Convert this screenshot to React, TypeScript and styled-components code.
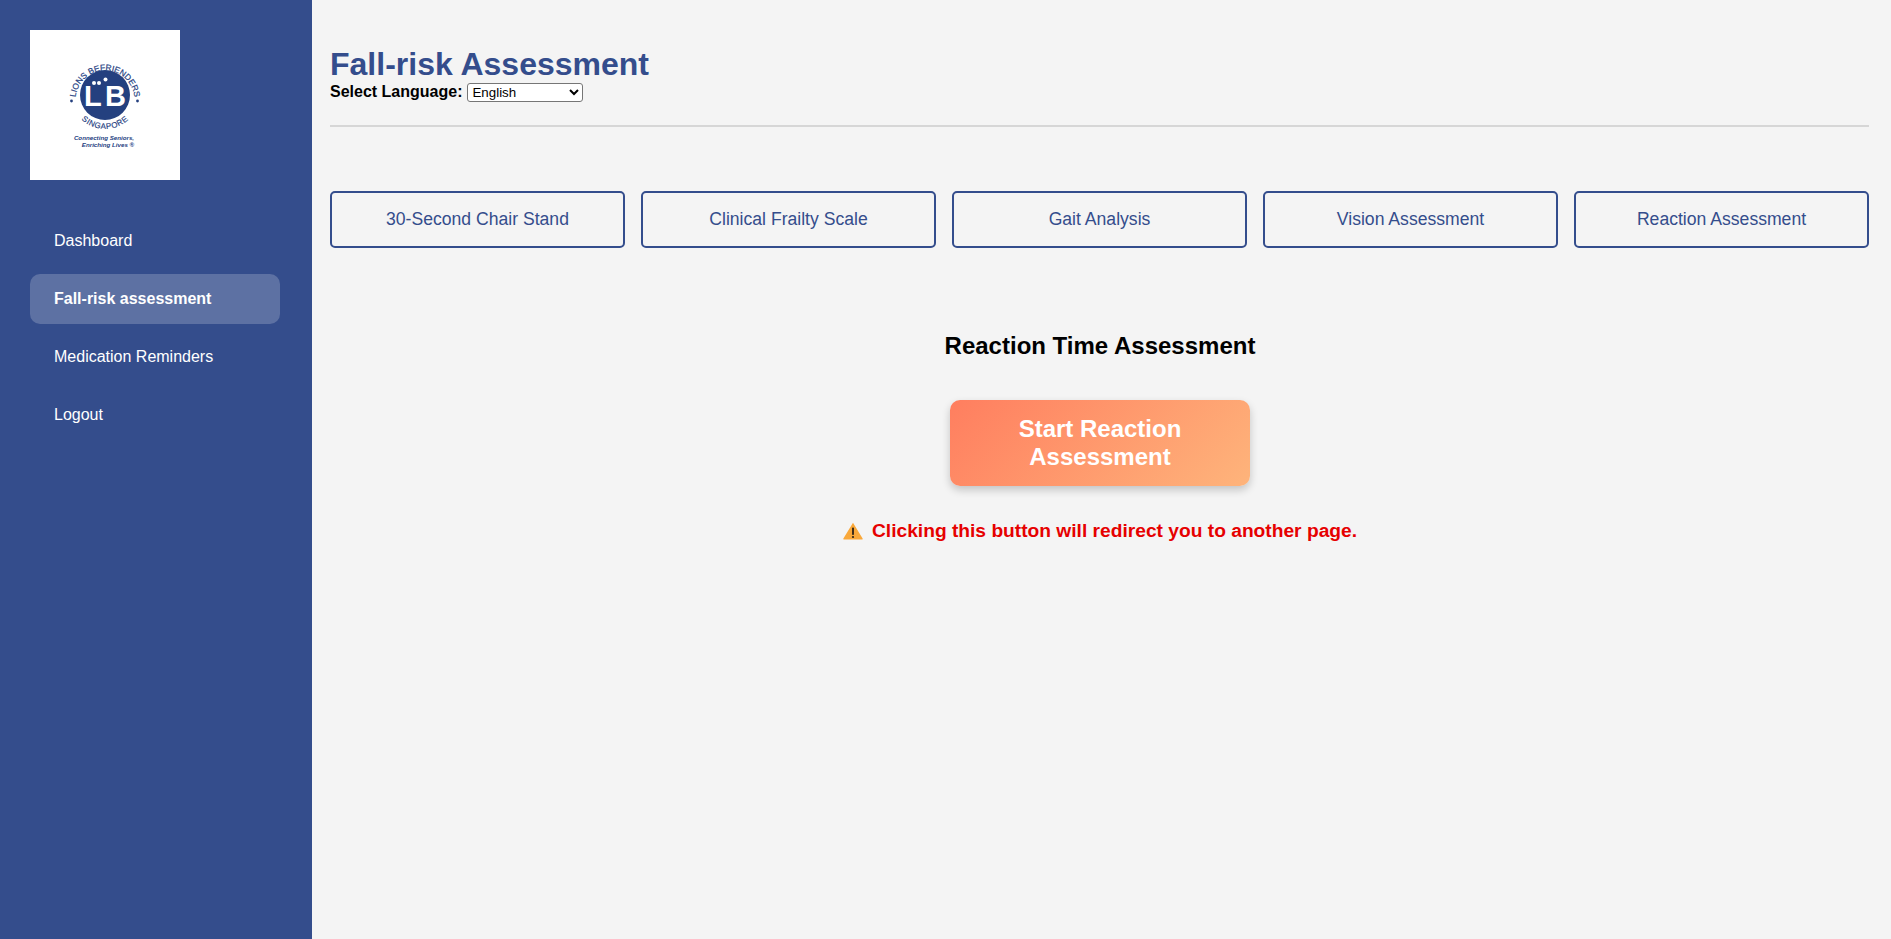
import React from "react";
import styled, { createGlobalStyle } from "styled-components";

const Global = createGlobalStyle`
  html, body { margin: 0; padding: 0; height: 100%; }
  body { font-family: "Liberation Sans", Arial, sans-serif; background: #f4f4f4; }
`;
const Page = styled.div`
  display: flex;
  height: 939px;
  overflow: hidden;
`;
const Sidebar = styled.aside`
  flex: 0 0 312px;
  box-sizing: border-box;
  padding: 30px 32px 30px 30px;
  background: #344d8c;
  display: flex;
  flex-direction: column;
`;
const LogoBox = styled.div`
  width: 150px;
  height: 150px;
  background: #fff;
  margin-bottom: 36px;
`;
const Nav = styled.nav`
  display: flex;
  flex-direction: column;
  gap: 8px;
`;
const NavItem = styled.a<{ $active?: boolean }>`
  display: flex;
  align-items: center;
  height: 50px;
  padding-left: 24px;
  border-radius: 10px;
  font-size: 16px;
  color: #fff;
  font-weight: ${(p) => (p.$active ? 700 : 400)};
  background: ${(p) => (p.$active ? "#5d71a3" : "transparent")};
`;
const Main = styled.main`
  flex: 1;
  box-sizing: border-box;
  padding: 46px 22px 0 18px;
`;
const Title = styled.h1`
  margin: 0;
  font-size: 32px;
  line-height: 37px;
  font-weight: 700;
  color: #344d8c;
`;
const LangRow = styled.div`
  display: flex;
  align-items: center;
  height: 18px;
  gap: 5px;
`;
const LangLabel = styled.label`
  font-size: 16px;
  font-weight: 700;
  color: #000;
`;
const LangSelect = styled.select`
  width: 116px;
  height: 19px;
  box-sizing: border-box;
  font-family: "Liberation Sans", Arial, sans-serif;
  font-size: 13.33px;
  background: #fff;
  color: #000;
  border: 1px solid #767676;
  border-radius: 3px;
  padding: 0;
`;
const Divider = styled.hr`
  margin: 24px 0 0;
  border: none;
  border-top: 2px solid #d6d6d6;
`;
const Tabs = styled.div`
  display: grid;
  grid-template-columns: repeat(5, 1fr);
  gap: 16px;
  margin-top: 64px;
`;
const Tab = styled.button`
  height: 57px;
  box-sizing: border-box;
  background: transparent;
  border: 2px solid #344d8c;
  border-radius: 5px;
  font-family: "Liberation Sans", Arial, sans-serif;
  font-size: 17.6px;
  color: #344d8c;
`;
const Section = styled.section`
  display: flex;
  flex-direction: column;
  align-items: center;
  margin-top: 84px;
  padding-left: 1px;
`;
const Heading = styled.h2`
  margin: 0;
  font-size: 24px;
  line-height: 28px;
  font-weight: 700;
  color: #000;
`;
const StartButton = styled.button`
  width: 300px;
  height: 86px;
  margin-top: 40px;
  box-sizing: border-box;
  padding: 0 40px;
  border: none;
  border-radius: 10px;
  background: linear-gradient(135deg, #ff7e5f, #feb47b);
  box-shadow: 0 4px 8px rgba(0, 0, 0, 0.2);
  color: #fff;
  font-family: "Liberation Sans", Arial, sans-serif;
  font-size: 24px;
  line-height: 28px;
  font-weight: 700;
`;
const Warning = styled.p`
  display: flex;
  align-items: center;
  gap: 9px;
  margin: 34px 0 0;
  font-size: 19.2px;
  line-height: 22px;
  font-weight: 700;
  color: #e60000;
`;
const LogoText = styled.text<{ $light?: boolean }>`
  font-family: "Liberation Sans", Arial, sans-serif;
  fill: ${(p) => (p.$light ? "#fff" : "#24407f")};
`;

const Logo = () => (
  <svg width="150" height="150" viewBox="0 0 150 150">
    <defs>
      <path id="arcTop" d="M 45.5 70 A 29.5 29.5 0 0 1 104.5 70" fill="none" />
      <path id="arcBottom" d="M 41 65 A 34 34 0 0 0 109 65" fill="none" />
    </defs>
    <circle cx="75" cy="65" r="25" fill="#24407f" />
    <LogoText fontSize="8.4" stroke="#24407f" strokeWidth="0.2">
      <textPath href="#arcTop" startOffset="50%" textAnchor="middle">LIONS BEFRIENDERS</textPath>
    </LogoText>
    <LogoText fontSize="8" letterSpacing="0.5" stroke="#24407f" strokeWidth="0.15">
      <textPath href="#arcBottom" startOffset="50%" textAnchor="middle">SINGAPORE</textPath>
    </LogoText>
    <circle cx="41.5" cy="71" r="1.4" fill="#24407f" />
    <circle cx="107.5" cy="71" r="1.4" fill="#24407f" />
    <LogoText $light x="54" y="76" fontSize="29" fontWeight="700">L</LogoText>
    <LogoText $light x="75" y="76" fontSize="29" fontWeight="700">B</LogoText>
    <circle cx="64" cy="53" r="2" fill="#fff" />
    <circle cx="69" cy="53" r="2" fill="#fff" />
    <circle cx="75.5" cy="49.5" r="2" fill="#fff" />
    <LogoText x="74" y="109.5" fontSize="6.2" fontWeight="700" fontStyle="italic" textAnchor="middle">Connecting Seniors,</LogoText>
    <LogoText x="78" y="117" fontSize="6.2" fontWeight="700" fontStyle="italic" textAnchor="middle">Enriching Lives ®</LogoText>
  </svg>
);

const WarnIcon = () => (
  <svg width="20" height="18" viewBox="0 0 20 18">
    <path d="M10 0.8 L19.6 16.4 a0.8 0.8 0 0 1 -0.7 1.2 H1.1 a0.8 0.8 0 0 1 -0.7 -1.2 Z" fill="#f9a83a" />
    <rect x="9.1" y="5.5" width="1.8" height="7.5" rx="0.7" fill="#2a2118" />
    <circle cx="10" cy="15" r="1.1" fill="#2a2118" />
  </svg>
);

const tabs = ["30-Second Chair Stand", "Clinical Frailty Scale", "Gait Analysis", "Vision Assessment", "Reaction Assessment"];

export default function App() {
  return (
    <Page>
      <Global />
      <Sidebar>
        <LogoBox><Logo /></LogoBox>
        <Nav>
          <NavItem>Dashboard</NavItem>
          <NavItem $active>Fall-risk assessment</NavItem>
          <NavItem>Medication Reminders</NavItem>
          <NavItem>Logout</NavItem>
        </Nav>
      </Sidebar>
      <Main>
        <Title>Fall-risk Assessment</Title>
        <LangRow>
          <LangLabel>Select Language:</LangLabel>
          <LangSelect defaultValue="English"><option>English</option></LangSelect>
        </LangRow>
        <Divider />
        <Tabs>{tabs.map((t) => <Tab key={t}>{t}</Tab>)}</Tabs>
        <Section>
          <Heading>Reaction Time Assessment</Heading>
          <StartButton>Start Reaction Assessment</StartButton>
          <Warning><WarnIcon />Clicking this button will redirect you to another page.</Warning>
        </Section>
      </Main>
    </Page>
  );
}
